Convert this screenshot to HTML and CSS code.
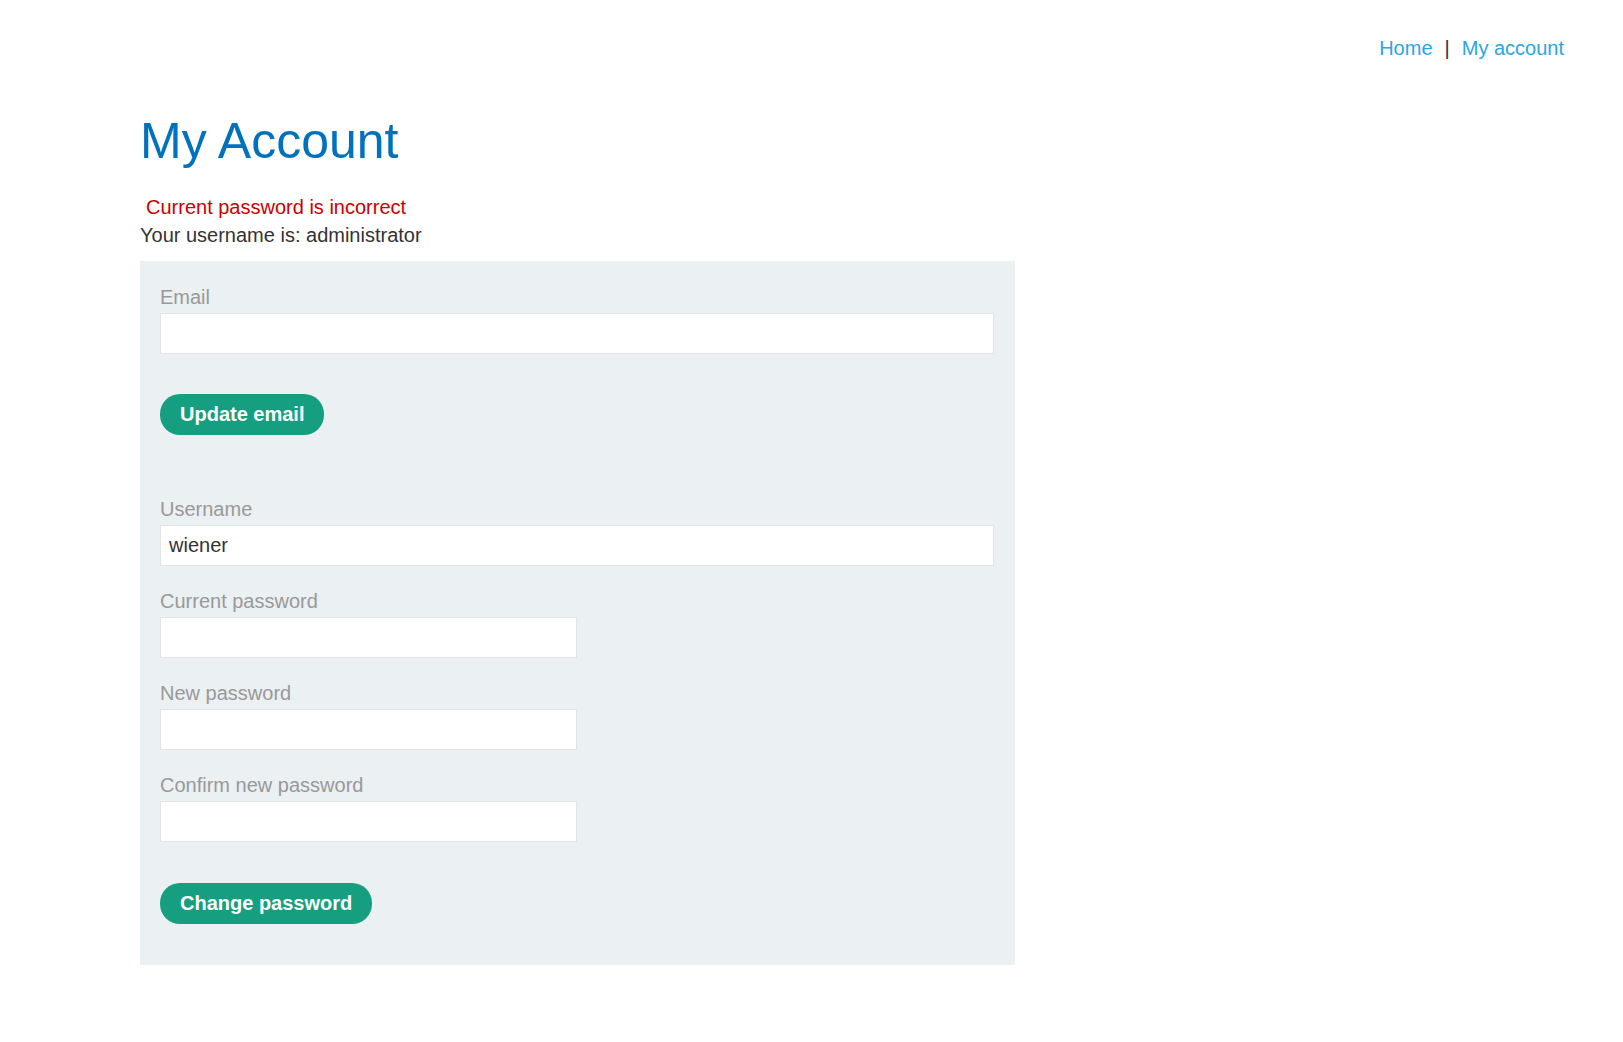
FILE: index.html
```html
<!DOCTYPE html>
<html lang="en">
<head>
<meta charset="utf-8">
<title>My Account</title>
<link rel="stylesheet" href="styles.css">
</head>
<body>
  <header class="top-nav">
    <a class="nav-link" href="/">Home</a>
    <span class="nav-sep">|</span>
    <a class="nav-link" href="/my-account">My account</a>
  </header>
  <main class="account">
    <h1 class="account-title">My Account</h1>
    <p class="is-warning">Current password is incorrect</p>
    <p class="username-line">Your username is: administrator</p>
    <section class="account-panel">
      <form class="account-form email-form">
        <label class="field-label" for="email">Email</label>
        <input class="field-input field-wide" id="email" type="email">
        <button class="btn" type="button">Update email</button>
      </form>
      <form class="account-form password-form">
        <label class="field-label" for="username">Username</label>
        <input class="field-input field-wide" id="username" type="text" value="wiener">
        <label class="field-label" for="current-password">Current password</label>
        <input class="field-input field-narrow" id="current-password" type="password">
        <label class="field-label" for="new-password-1">New password</label>
        <input class="field-input field-narrow" id="new-password-1" type="password">
        <label class="field-label" for="new-password-2">Confirm new password</label>
        <input class="field-input field-narrow" id="new-password-2" type="password">
        <button class="btn" type="button">Change password</button>
      </form>
    </section>
  </main>
</body>
</html>
```
FILE: styles.css
```css
html, body {
  margin: 0;
  padding: 0;
  background: #fff;
}

body {
  font-family: "Liberation Sans", Arial, Helvetica, sans-serif;
  font-size: 20px;
  color: #333;
}

.top-nav {
  display: flex;
  justify-content: flex-end;
  align-items: baseline;
  gap: 12px;
  padding: 36px 59px 0 0;
  line-height: 24px;
}

.nav-link {
  color: #29a6e2;
  text-decoration: none;
}

.nav-sep {
  color: #2b3440;
}

.account {
  padding-left: 140px;
  width: 875px;
}

.account-title {
  margin: 51px 0 0;
  font-size: 50px;
  line-height: 60px;
  font-weight: normal;
  color: #0071bc;
}

.is-warning {
  margin: 24px 0 0;
  padding-left: 6px;
  line-height: 24px;
  color: #cc0000;
}

.username-line {
  margin: 4px 0 14px;
  line-height: 24px;
  color: #333;
}

.account-panel {
  background: #ebf0f2;
  padding: 20px 20px 21px;
}

.account-form {
  display: flex;
  flex-direction: column;
  align-items: flex-start;
}

.email-form {
  margin-bottom: 38px;
}

.field-label {
  display: block;
  line-height: 32px;
  color: #999;
}

.field-input {
  box-sizing: border-box;
  height: 41px;
  margin: 0 0 19px;
  padding: 0 8px;
  border: 1px solid #e1e4e6;
  background: #fff;
  font-family: inherit;
  font-size: 20px;
  color: #333;
  outline: none;
}

.field-wide {
  width: 834px;
}

.email-form .field-input {
  margin-bottom: 20px;
}

.field-narrow {
  width: 417px;
}

.btn {
  margin: 20px 0 20px;
  height: 41px;
  padding: 0 20px;
  border: 0;
  border-radius: 20px;
  background: #169e80;
  color: #fff;
  font-family: inherit;
  font-size: 20px;
  font-weight: bold;
  cursor: pointer;
}

.password-form .btn {
  margin-top: 22px;
}
```
